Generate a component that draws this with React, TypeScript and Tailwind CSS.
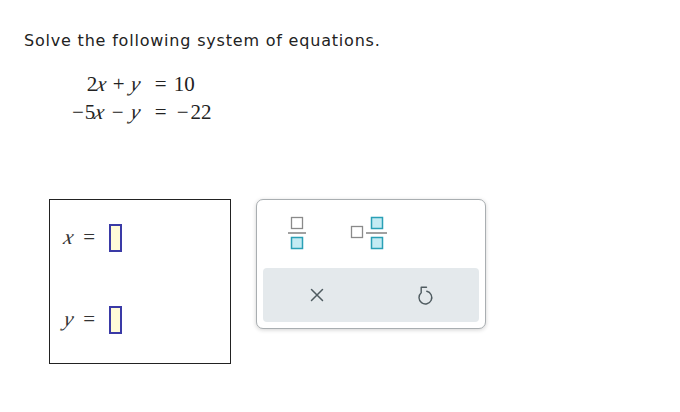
import React from "react";

const serif = { fontFamily: '"Liberation Serif", "Times New Roman", serif' };

function V({ children }: { children: React.ReactNode }) {
  return <span className="inline-block italic -skew-x-12">{children}</span>;
}

function InputBox() {
  return <span className="inline-block w-[13px] h-[28px] border-2 border-[#3a3aa6] bg-[#fffbd8]" />;
}

function FracIcon() {
  return (
    <svg width="20" height="36" viewBox="0 0 20 36">
      <rect x="4.5" y="2.5" width="11" height="11" fill="#fff" stroke="#8a8a8a" strokeWidth="1.3" />
      <line x1="1" y1="18" x2="19" y2="18" stroke="#8a8a8a" strokeWidth="1.6" />
      <rect x="4.5" y="22.5" width="11" height="11" fill="#c4ebf3" stroke="#2aa0b6" strokeWidth="1.5" />
    </svg>
  );
}

function MixedIcon() {
  return (
    <svg width="40" height="36" viewBox="0 0 40 36">
      <rect x="2.5" y="11.5" width="11" height="11" fill="#fff" stroke="#8a8a8a" strokeWidth="1.3" />
      <line x1="17" y1="18" x2="38" y2="18" stroke="#8a8a8a" strokeWidth="1.6" />
      <rect x="22.5" y="2.5" width="11" height="11" fill="#c4ebf3" stroke="#2aa0b6" strokeWidth="1.5" />
      <rect x="22.5" y="22.5" width="11" height="11" fill="#c4ebf3" stroke="#2aa0b6" strokeWidth="1.5" />
    </svg>
  );
}

function XIcon() {
  return (
    <svg width="14" height="14" viewBox="0 0 14 14">
      <path d="M1.5 1.5 L12.5 12.5 M12.5 1.5 L1.5 12.5" stroke="#4f5b60" strokeWidth="1.5" strokeLinecap="round" />
    </svg>
  );
}

function UndoIcon() {
  return (
    <svg width="20" height="22" viewBox="0 0 20 22">
      <path
        d="M11.5 3.2 H6.2 V8.7 A6.4 6.4 0 1 0 11.8 7.3"
        fill="none"
        stroke="#4f5b60"
        strokeWidth="1.4"
        strokeLinecap="round"
        strokeLinejoin="round"
      />
    </svg>
  );
}

export default function App() {
  return (
    <div className="w-[680px] h-[412px] bg-white relative overflow-hidden">
      <div className="pl-[24px] pt-[31px]">
        <div
          className="text-[16px] leading-[20px] text-[#222] tracking-[0.8px]"
          style={{ fontFamily: '"DejaVu Sans", Verdana, sans-serif' }}
        >
          Solve the following system of equations.
        </div>

        <div
          className="mt-[19px] ml-[48px] grid grid-cols-[auto_auto] w-fit text-[21px] leading-[28px] text-[#222]"
          style={serif}
        >
          <div className="text-right pr-[15px]">
            2<V>x</V>
            <span className="mx-[6px]">+</span>
            <V>y</V>
          </div>
          <div>
            =<span className="ml-[7px]">10</span>
          </div>
          <div className="text-right pr-[15px]">
            −<span className="ml-[1px]">5</span>
            <V>x</V>
            <span className="mx-[7px]">−</span>
            <V>y</V>
          </div>
          <div>
            =<span className="ml-[10px]">−</span>
            <span className="ml-[2px]">22</span>
          </div>
        </div>

        <div className="mt-[73px] ml-[25px] flex items-start gap-[25px]">
          <div className="w-[182px] h-[165px] border border-[#222] flex flex-col pt-[24px] pl-[14px] gap-[54px]">
            <div className="flex items-center h-[28px] text-[21px] text-[#333]" style={serif}>
              <V>x</V>
              <span className="ml-[10px]">=</span>
              <span className="ml-[14px] flex"><InputBox /></span>
            </div>
            <div className="flex items-center h-[28px] text-[21px] text-[#333]" style={serif}>
              <V>y</V>
              <span className="ml-[10px]">=</span>
              <span className="ml-[14px] flex"><InputBox /></span>
            </div>
          </div>

          <div className="w-[230px] h-[130px] rounded-[7px] border border-[#a9aeb1] bg-white shadow-[0_1px_4px_rgba(0,0,0,0.18)] flex flex-col px-[6px] pt-[15px] pb-[6px]">
            <div className="flex items-start h-[36px] pl-[24px]">
              <FracIcon />
              <div className="ml-[42px]">
                <MixedIcon />
              </div>
            </div>
            <div className="mt-[17px] h-[54px] rounded-[4px] bg-[#e4e9ec] flex">
              <div className="flex-1 flex items-center justify-center">
                <XIcon />
              </div>
              <div className="flex-1 flex items-center justify-center">
                <UndoIcon />
              </div>
            </div>
          </div>
        </div>
      </div>
    </div>
  );
}
